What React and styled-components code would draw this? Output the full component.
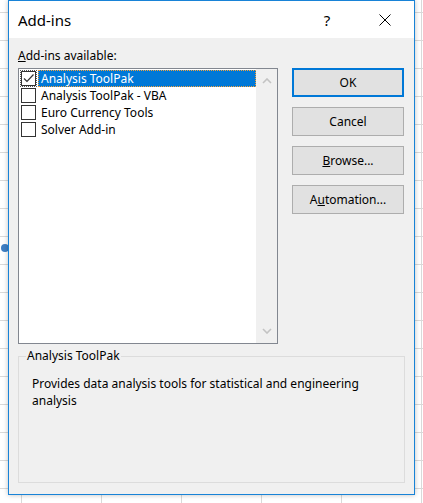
import styled, { createGlobalStyle } from "styled-components";

const GlobalStyle = createGlobalStyle`
  html, body {
    margin: 0;
    padding: 0;
  }
  body {
    font-family: "Noto Sans", "DejaVu Sans", sans-serif;
    color: #000;
  }
`;

const Sheet = styled.div`
  position: relative;
  width: 423px;
  height: 503px;
  overflow: hidden;
  background-color: #fff;
  background-image: linear-gradient(to bottom, #d9d9d9 1px, transparent 1px),
    linear-gradient(to right, #d9d9d9 1px, transparent 1px);
  background-size: 100% 28px, 80px 100%;
  background-position: 0 12px, 21px 0;
`;

const Handle = styled.div`
  position: absolute;
  left: 1px;
  top: 244px;
  width: 8px;
  height: 8px;
  border-radius: 50%;
  background: #3f7fc4;
`;

const Dialog = styled.div`
  position: relative;
  z-index: 1;
  margin-left: 8px;
  width: 407px;
  height: 495px;
  box-sizing: border-box;
  border: 1px solid #1883d7;
  box-shadow: 0 0 5px rgba(0, 0, 0, 0.25);
  display: flex;
  flex-direction: column;
`;

const TitleBar = styled.div`
  display: flex;
  align-items: center;
  height: 37px;
  background: #fff;
  padding-left: 9px;
`;

const Title = styled.div`
  flex: 1;
  font-size: 15px;
`;

const TitleButton = styled.div`
  width: 58px;
  height: 100%;
  display: flex;
  align-items: center;
  justify-content: center;
  font-size: 15px;
`;

const Body = styled.div`
  flex: 1;
  background: #f0f0f0;
  padding: 0 9px;
  display: flex;
  flex-direction: column;
  font-size: 12px;
`;

const TopRow = styled.div`
  display: flex;
`;

const ListColumn = styled.div`
  width: 260px;
`;

const FieldLabel = styled.div`
  padding-top: 10px;
  line-height: 16px;
  margin-bottom: 4px;
`;

const ListBox = styled.div`
  display: flex;
  height: 276px;
  box-sizing: border-box;
  border: 1px solid #828790;
  background: #fff;
`;

const Items = styled.ul`
  flex: 1;
  margin: 0;
  padding: 1px 0 0 2px;
  list-style: none;
`;

const Item = styled.li`
  display: flex;
  align-items: center;
  height: 17px;
`;

const Check = styled.span`
  width: 15px;
  height: 15px;
  box-sizing: border-box;
  border: 1px solid #333;
  background: #fff;
  display: flex;
  align-items: center;
  justify-content: center;
  outline: ${(p) => (p.$focused ? "1px dotted #555" : "none")};
`;

const ItemLabel = styled.span`
  flex: 1;
  height: 17px;
  margin-left: 2px;
  padding-left: 2px;
  box-sizing: border-box;
  line-height: 15px;
  white-space: nowrap;
  color: ${(p) => (p.$selected ? "#fff" : "#000")};
  background: ${(p) => (p.$selected ? "#0078d7" : "transparent")};
  border: 1px ${(p) => (p.$selected ? "dotted #f6a33b" : "solid transparent")};
`;

const ScrollBar = styled.div`
  width: 21px;
  background: #f0f0f0;
  display: flex;
  flex-direction: column;
  justify-content: space-between;
  align-items: center;
  padding: 9px 0;
`;

const Buttons = styled.div`
  margin-left: 14px;
  padding-top: 30px;
  display: flex;
  flex-direction: column;
  gap: 10px;
`;

const Button = styled.button`
  width: 112px;
  height: 29px;
  box-sizing: border-box;
  padding: 0;
  border: ${(p) => (p.$default ? "2px solid #0078d7" : "1px solid #adadad")};
  background: #e1e1e1;
  color: #000;
  font-family: "Noto Sans", "DejaVu Sans", sans-serif;
  font-size: 12px;
`;

const Group = styled.fieldset`
  margin: 4px 0 0;
  padding: 0;
  min-width: 0;
  height: 135px;
  box-sizing: border-box;
  border: 1px solid #dcdcdc;
`;

const Legend = styled.legend`
  margin-left: 7px;
  padding: 0 1px;
  line-height: 16px;
`;

const Description = styled.p`
  margin: 11px 0 0;
  padding: 0 13px;
  line-height: 17px;
`;

const Chevron = ({ up }) => (
  <svg width="10" height="6" viewBox="0 0 10 6">
    <polyline
      points={up ? "1,5 5,1 9,5" : "1,1 5,5 9,1"}
      fill="none"
      stroke="#c3c3c3"
      strokeWidth="1.6"
    />
  </svg>
);

const addins = [
  { name: "Analysis ToolPak", checked: true },
  { name: "Analysis ToolPak - VBA", checked: false },
  { name: "Euro Currency Tools", checked: false },
  { name: "Solver Add-in", checked: false },
];

export default function App() {
  return (
    <Sheet>
      <GlobalStyle />
      <Handle />
      <Dialog>
        <TitleBar>
          <Title>Add-ins</Title>
          <TitleButton>?</TitleButton>
          <TitleButton>
            <svg width="12" height="12" viewBox="0 0 12 12">
              <path d="M0.5 0.5 L11.5 11.5 M11.5 0.5 L0.5 11.5" stroke="#000" strokeWidth="1" />
            </svg>
          </TitleButton>
        </TitleBar>
        <Body>
          <TopRow>
            <ListColumn>
              <FieldLabel>
                <u>A</u>dd-ins available:
              </FieldLabel>
              <ListBox>
                <Items>
                  {addins.map((a, i) => (
                    <Item key={a.name}>
                      <Check $focused={i === 0}>
                        {a.checked && (
                          <svg width="13" height="13" viewBox="0 0 13 13">
                            <polyline
                              points="2,6.5 5,9.5 11.5,2.5"
                              fill="none"
                              stroke="#333"
                              strokeWidth="1.2"
                            />
                          </svg>
                        )}
                      </Check>
                      <ItemLabel $selected={i === 0}>{a.name}</ItemLabel>
                    </Item>
                  ))}
                </Items>
                <ScrollBar>
                  <Chevron up />
                  <Chevron />
                </ScrollBar>
              </ListBox>
            </ListColumn>
            <Buttons>
              <Button $default>OK</Button>
              <Button>Cancel</Button>
              <Button>
                <u>B</u>rowse...
              </Button>
              <Button>
                A<u>u</u>tomation...
              </Button>
            </Buttons>
          </TopRow>
          <Group>
            <Legend>Analysis ToolPak</Legend>
            <Description>
              Provides data analysis tools for statistical and engineering analysis
            </Description>
          </Group>
        </Body>
      </Dialog>
    </Sheet>
  );
}
